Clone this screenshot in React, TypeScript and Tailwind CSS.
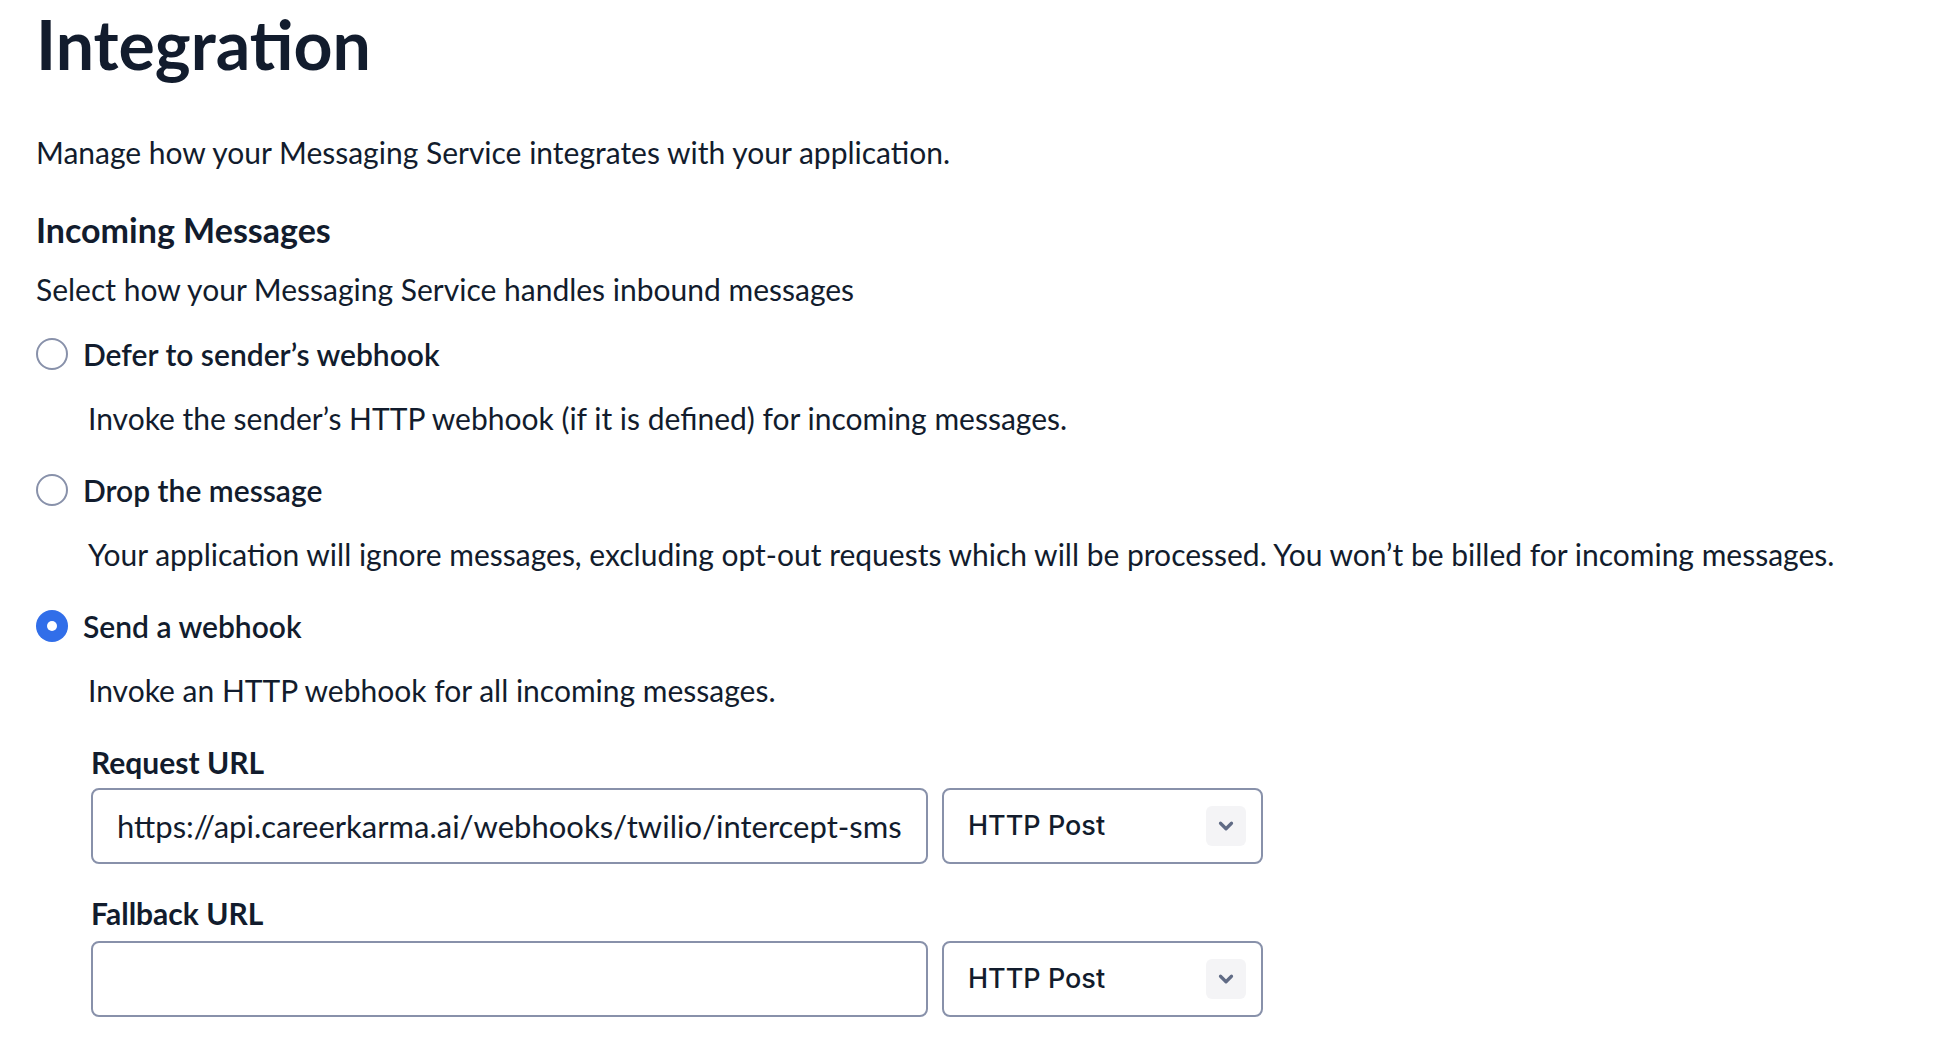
import { ChevronDown } from "lucide-react";

const ink = "text-[#121c2d]";

function Radio({ checked, label }: { checked?: boolean; label: string }) {
  return (
    <div className="flex h-10 items-center gap-[15px]">
      {checked ? (
        <span className="grid h-8 w-8 place-items-center rounded-full bg-[#316ee9]">
          <span className="h-[10px] w-[10px] rounded-full bg-white" />
        </span>
      ) : (
        <span className="h-8 w-8 rounded-full border-2 border-[#8891aa] bg-white" />
      )}
      <span className="text-[30px] font-semibold leading-10">{label}</span>
    </div>
  );
}

function UrlField({ label, value, first }: { label: string; value: string; first?: boolean }) {
  return (
    <div className={first ? "mt-[34px]" : "mt-[31px]"}>
      <p className="text-[30px] font-bold leading-9">{label}</p>
      <div className={`flex gap-[14px] ${first ? "mt-2" : "mt-[10px]"}`}>
        <input
          readOnly
          defaultValue={value}
          className={`h-[76px] w-[837px] rounded-lg border-2 border-[#8891aa] bg-white px-6 text-[31px] outline-none ${ink}`}
          style={{ fontFamily: "Lato, 'Noto Sans', sans-serif" }}
        />
        <div className="flex h-[76px] w-[321px] items-center justify-between rounded-lg border-2 border-[#8891aa] bg-white pl-6 pr-[15px]">
          <span className="font-['Inter',sans-serif] text-[27px] font-medium">HTTP Post</span>
          <span className="grid h-10 w-10 place-items-center rounded-md bg-[#f4f4f6]">
            <ChevronDown size={22} strokeWidth={3.5} className="text-[#606b85]" />
          </span>
        </div>
      </div>
    </div>
  );
}

export default function App() {
  return (
    <div className={`min-h-screen bg-white pl-9 pt-1 font-['Lato','Noto_Sans',sans-serif] ${ink}`}>
      <h1 className="text-[68px] font-bold leading-[80px]">Integration</h1>
      <p className="mt-12 text-[30px] leading-10">
        Manage how your Messaging Service integrates with your application.
      </p>
      <h2 className="mt-10 text-[34px] font-bold leading-9">Incoming Messages</h2>
      <p className="mt-[21px] text-[30px] leading-10">
        Select how your Messaging Service handles inbound messages
      </p>

      <div className="mt-[25px]">
        <Radio label="Defer to sender’s webhook" />
        <p className="mt-6 pl-[52px] text-[30px] leading-10">
          Invoke the sender’s HTTP webhook (if it is defined) for incoming messages.
        </p>
      </div>
      <div className="mt-8">
        <Radio label="Drop the message" />
        <p className="mt-6 pl-[52px] text-[30px] leading-10">
          Your application will ignore messages, excluding opt-out requests which will be processed. You won’t be billed for incoming messages.
        </p>
      </div>
      <div className="mt-8">
        <Radio checked label="Send a webhook" />
        <p className="mt-6 pl-[52px] text-[30px] leading-10">
          Invoke an HTTP webhook for all incoming messages.
        </p>
      </div>

      <div className="pl-[55px]">
        <UrlField first label="Request URL" value="https://api.careerkarma.ai/webhooks/twilio/intercept-sms" />
        <UrlField label="Fallback URL" value="" />
      </div>
    </div>
  );
}
